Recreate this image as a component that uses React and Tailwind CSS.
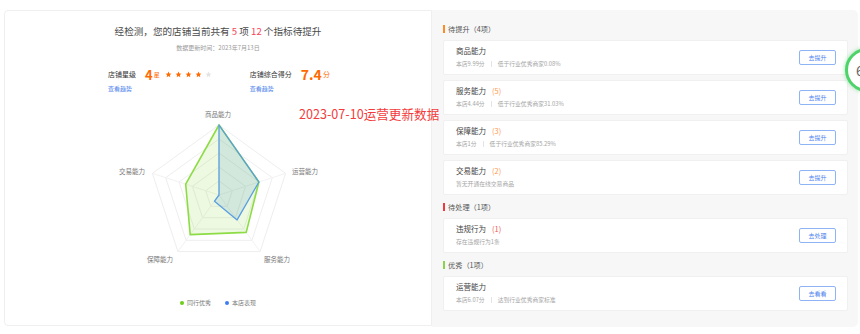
import React from 'react';

const CX = 215;
const CY = 90;
const R = 70;
const ANGLES = [-90, -18, 54, 126, 198];

const toPoints = (values) =>
    values
        .map((v, i) => {
            const a = (ANGLES[i] * Math.PI) / 180;
            return `${(CX + v * R * Math.cos(a)).toFixed(1)},${(CY + v * R * Math.sin(a)).toFixed(1)}`;
        })
        .join(' ');

const peerValues = [1, 0.6, 0.66, 0.7, 0.5];
const shopValues = [1, 0.6, 0.44, 0.11, 0];

const axisLabels = [
    { text: '商品能力', x: 214, y: 10, anchor: 'middle' },
    { text: '运营能力', x: 288, y: 67, anchor: 'start' },
    { text: '服务能力', x: 273, y: 155, anchor: 'middle' },
    { text: '保障能力', x: 156, y: 155, anchor: 'middle' },
    { text: '交易能力', x: 141, y: 67, anchor: 'end' },
];

const Star = ({ on }) => (
    <svg width="7" height="7" viewBox="0 0 24 24">
        <path
            d="M12 2l2.9 6.6 7.1.7-5.4 4.8 1.6 7-6.2-3.7-6.2 3.7 1.6-7L2 9.3l7.1-.7z"
            fill={on ? '#ff6a00' : '#e3e3e3'}
        />
    </svg>
);

const Radar = () => (
    <svg width="428" height="168" className="block">
        {/* grid */}
        {[1, 0.8, 0.6, 0.4, 0.2].map((lv) => (
            <polygon key={lv} points={toPoints([lv, lv, lv, lv, lv])} fill="none" stroke="#eeeeee" strokeWidth="1" />
        ))}
        {ANGLES.map((deg) => {
            const a = (deg * Math.PI) / 180;
            return (
                <line
                    key={deg}
                    x1={CX}
                    y1={CY}
                    x2={CX + R * Math.cos(a)}
                    y2={CY + R * Math.sin(a)}
                    stroke="#f2f2f2"
                    strokeWidth="1"
                />
            );
        })}
        <polygon points={toPoints(peerValues)} fill="rgba(140,218,70,0.16)" stroke="#8ddc45" strokeWidth="1.6" strokeLinejoin="round" />
        <polygon points={toPoints(shopValues)} fill="rgba(70,140,200,0.16)" stroke="#5a9ee0" strokeWidth="1.3" strokeLinejoin="round" />
        {axisLabels.map((l) => (
            <text key={l.text} x={l.x} y={l.y} textAnchor={l.anchor} fontSize="6.5" fill="#777" dominantBaseline="middle">
                {l.text}
            </text>
        ))}
    </svg>
);

const sections = [
    {
        title: '待提升（4项）',
        bar: 'bg-[#ff8a1f]',
        items: [
            { name: '商品能力', score: '本店9.99分', desc: '低于行业优秀商家0.08%', btn: '去提升' },
            { name: '服务能力', count: '(5)', score: '本店4.44分', desc: '低于行业优秀商家31.03%', btn: '去提升' },
            { name: '保障能力', count: '(3)', score: '本店1分', desc: '低于行业优秀商家85.29%', btn: '去提升' },
            { name: '交易能力', count: '(2)', desc: '暂无开通在线交易商品', btn: '去提升' },
        ],
    },
    {
        title: '待处理（1项）',
        bar: 'bg-[#f0393d]',
        items: [{ name: '违规行为', count: '(1)', red: true, desc: '存在违规行为1条', btn: '去处理' }],
    },
    {
        title: '优秀（1项）',
        bar: 'bg-[#8ad44a]',
        items: [{ name: '运营能力', score: '本店6.07分', desc: '达到行业优秀商家标准', btn: '去看看' }],
    },
];

const ItemCard = ({ item }) => (
    <div className="h-[35px] bg-white rounded-[2px] border border-[#f0f0f0] flex items-center justify-between pl-[12px] pr-[11px]">
        <div className="flex flex-col gap-[3px]">
            <div className="h-[10px] leading-[10px] text-[7.5px] text-[#444] flex items-center">
                <span>{item.name}</span>
                {item.count && (
                    <span className={`ml-[6px] ${item.red ? 'text-[#f25757]' : 'text-[#ff9a55]'}`}>{item.count}</span>
                )}
            </div>
            <div className="h-[10px] leading-[10px] text-[5.8px] text-[#a5a5a5] flex items-center">
                {item.score && (
                    <>
                        <span>{item.score}</span>
                        <span className="mx-[6px] w-px h-[6px] bg-[#e3e3e3]" />
                    </>
                )}
                <span>{item.desc}</span>
            </div>
        </div>
        <button className="w-[37px] h-[15px] border border-[#8fb4f5] rounded-[2px] bg-white text-[6px] text-[#4d82ee] leading-none">
            {item.btn}
        </button>
    </div>
);

export default function App() {
    return (
        <div className="relative w-[860px] h-[334px] bg-white overflow-hidden font-['Noto_Sans_CJK_SC','Noto_Sans',sans-serif]">
            <div className="flex pt-[10px] pl-[4px]">
                {/* Left: overview */}
                <div className="w-[428px] h-[316px] bg-white border border-[#efefef] rounded-l-[4px] flex flex-col items-center">
                    <div className="mt-[13px] h-[14px] leading-[14px] text-[9.6px] text-[#4a4a4a]">
                        经检测，您的店铺当前共有 <span className="text-[#f5455a]">5</span> 项{' '}
                        <span className="text-[#f5455a]">12</span> 个指标待提升
                    </div>
                    <div className="mt-[5px] h-[9px] leading-[9px] text-[6px] text-[#999]">数据更新时间：2023年7月13日</div>

                    <div className="mt-[14px] flex gap-[38px] pl-[2px]">
                        <div className="flex flex-col">
                            <div className="flex items-center h-[16px]">
                                <span className="text-[7px] text-[#333]">店铺星级</span>
                                <span className="ml-[9px] text-[13px] font-bold text-[#ff6a00] leading-none">4</span>
                                <span className="ml-[1px] text-[6px] text-[#ff6a00] self-center">星</span>
                                <div className="ml-[5px] flex gap-[3px]">
                                    <Star on />
                                    <Star on />
                                    <Star on />
                                    <Star on />
                                    <Star />
                                </div>
                            </div>
                            <span className="text-[6px] text-[#4d82ee] leading-[9px] mt-[2px]">查看趋势</span>
                        </div>
                        <div className="flex flex-col">
                            <div className="flex items-center h-[16px]">
                                <span className="text-[7px] text-[#333]">店铺综合得分</span>
                                <span className="ml-[9px] text-[14px] font-bold text-[#ff6a00] leading-none">7.4</span>
                                <span className="ml-[1px] text-[7px] text-[#ff6a00]">分</span>
                            </div>
                            <span className="text-[6px] text-[#4d82ee] leading-[9px] mt-[2px]">查看趋势</span>
                        </div>
                    </div>

                    <div className="mt-[12px]">
                        <Radar />
                    </div>

                    <div className="mt-[25px] flex items-center gap-[14px] text-[6px] text-[#777]">
                        <div className="flex items-center gap-[3px]">
                            <span className="w-[4px] h-[4px] rounded-full bg-[#6ccd1a]" />
                            <span>同行优秀</span>
                        </div>
                        <div className="flex items-center gap-[3px]">
                            <span className="w-[4px] h-[4px] rounded-full bg-[#3f7ef0]" />
                            <span>本店表现</span>
                        </div>
                    </div>
                </div>

                {/* Right: todo list */}
                <div className="w-[426px] h-[317px] bg-[#f7f7f7] rounded-r-[5px] pl-[11px] pr-[10px] pt-[13px]">
                    {sections.map((s, si) => (
                        <div key={s.title} className={si > 0 ? 'mt-[6px]' : ''}>
                            <div className="flex items-center h-[12px]">
                                <span className={`w-[2px] h-[8px] ${s.bar}`} />
                                <span className="ml-[3px] text-[7.2px] text-[#555]">{s.title}</span>
                            </div>
                            <div className="mt-[5px] flex flex-col gap-[5px]">
                                {s.items.map((it) => (
                                    <ItemCard key={it.name} item={it} />
                                ))}
                            </div>
                        </div>
                    ))}
                </div>
            </div>

            {/* floating annotation */}
            <div className="absolute left-[299px] top-[106px] text-[12.6px] leading-[16px] text-[#f33b3b] whitespace-nowrap">
                2023-07-10运营更新数据
            </div>

            {/* floating score badge */}
            <div className="absolute left-[845px] top-[48px] w-[44px] h-[44px] rounded-full border-[3px] border-[#4ed36a] shadow-[0_0_4px_rgba(78,211,106,0.6)] bg-white flex items-center justify-center">
                <span className="text-[14px] text-[#666] pr-[14px]">6</span>
            </div>
        </div>
    );
}
